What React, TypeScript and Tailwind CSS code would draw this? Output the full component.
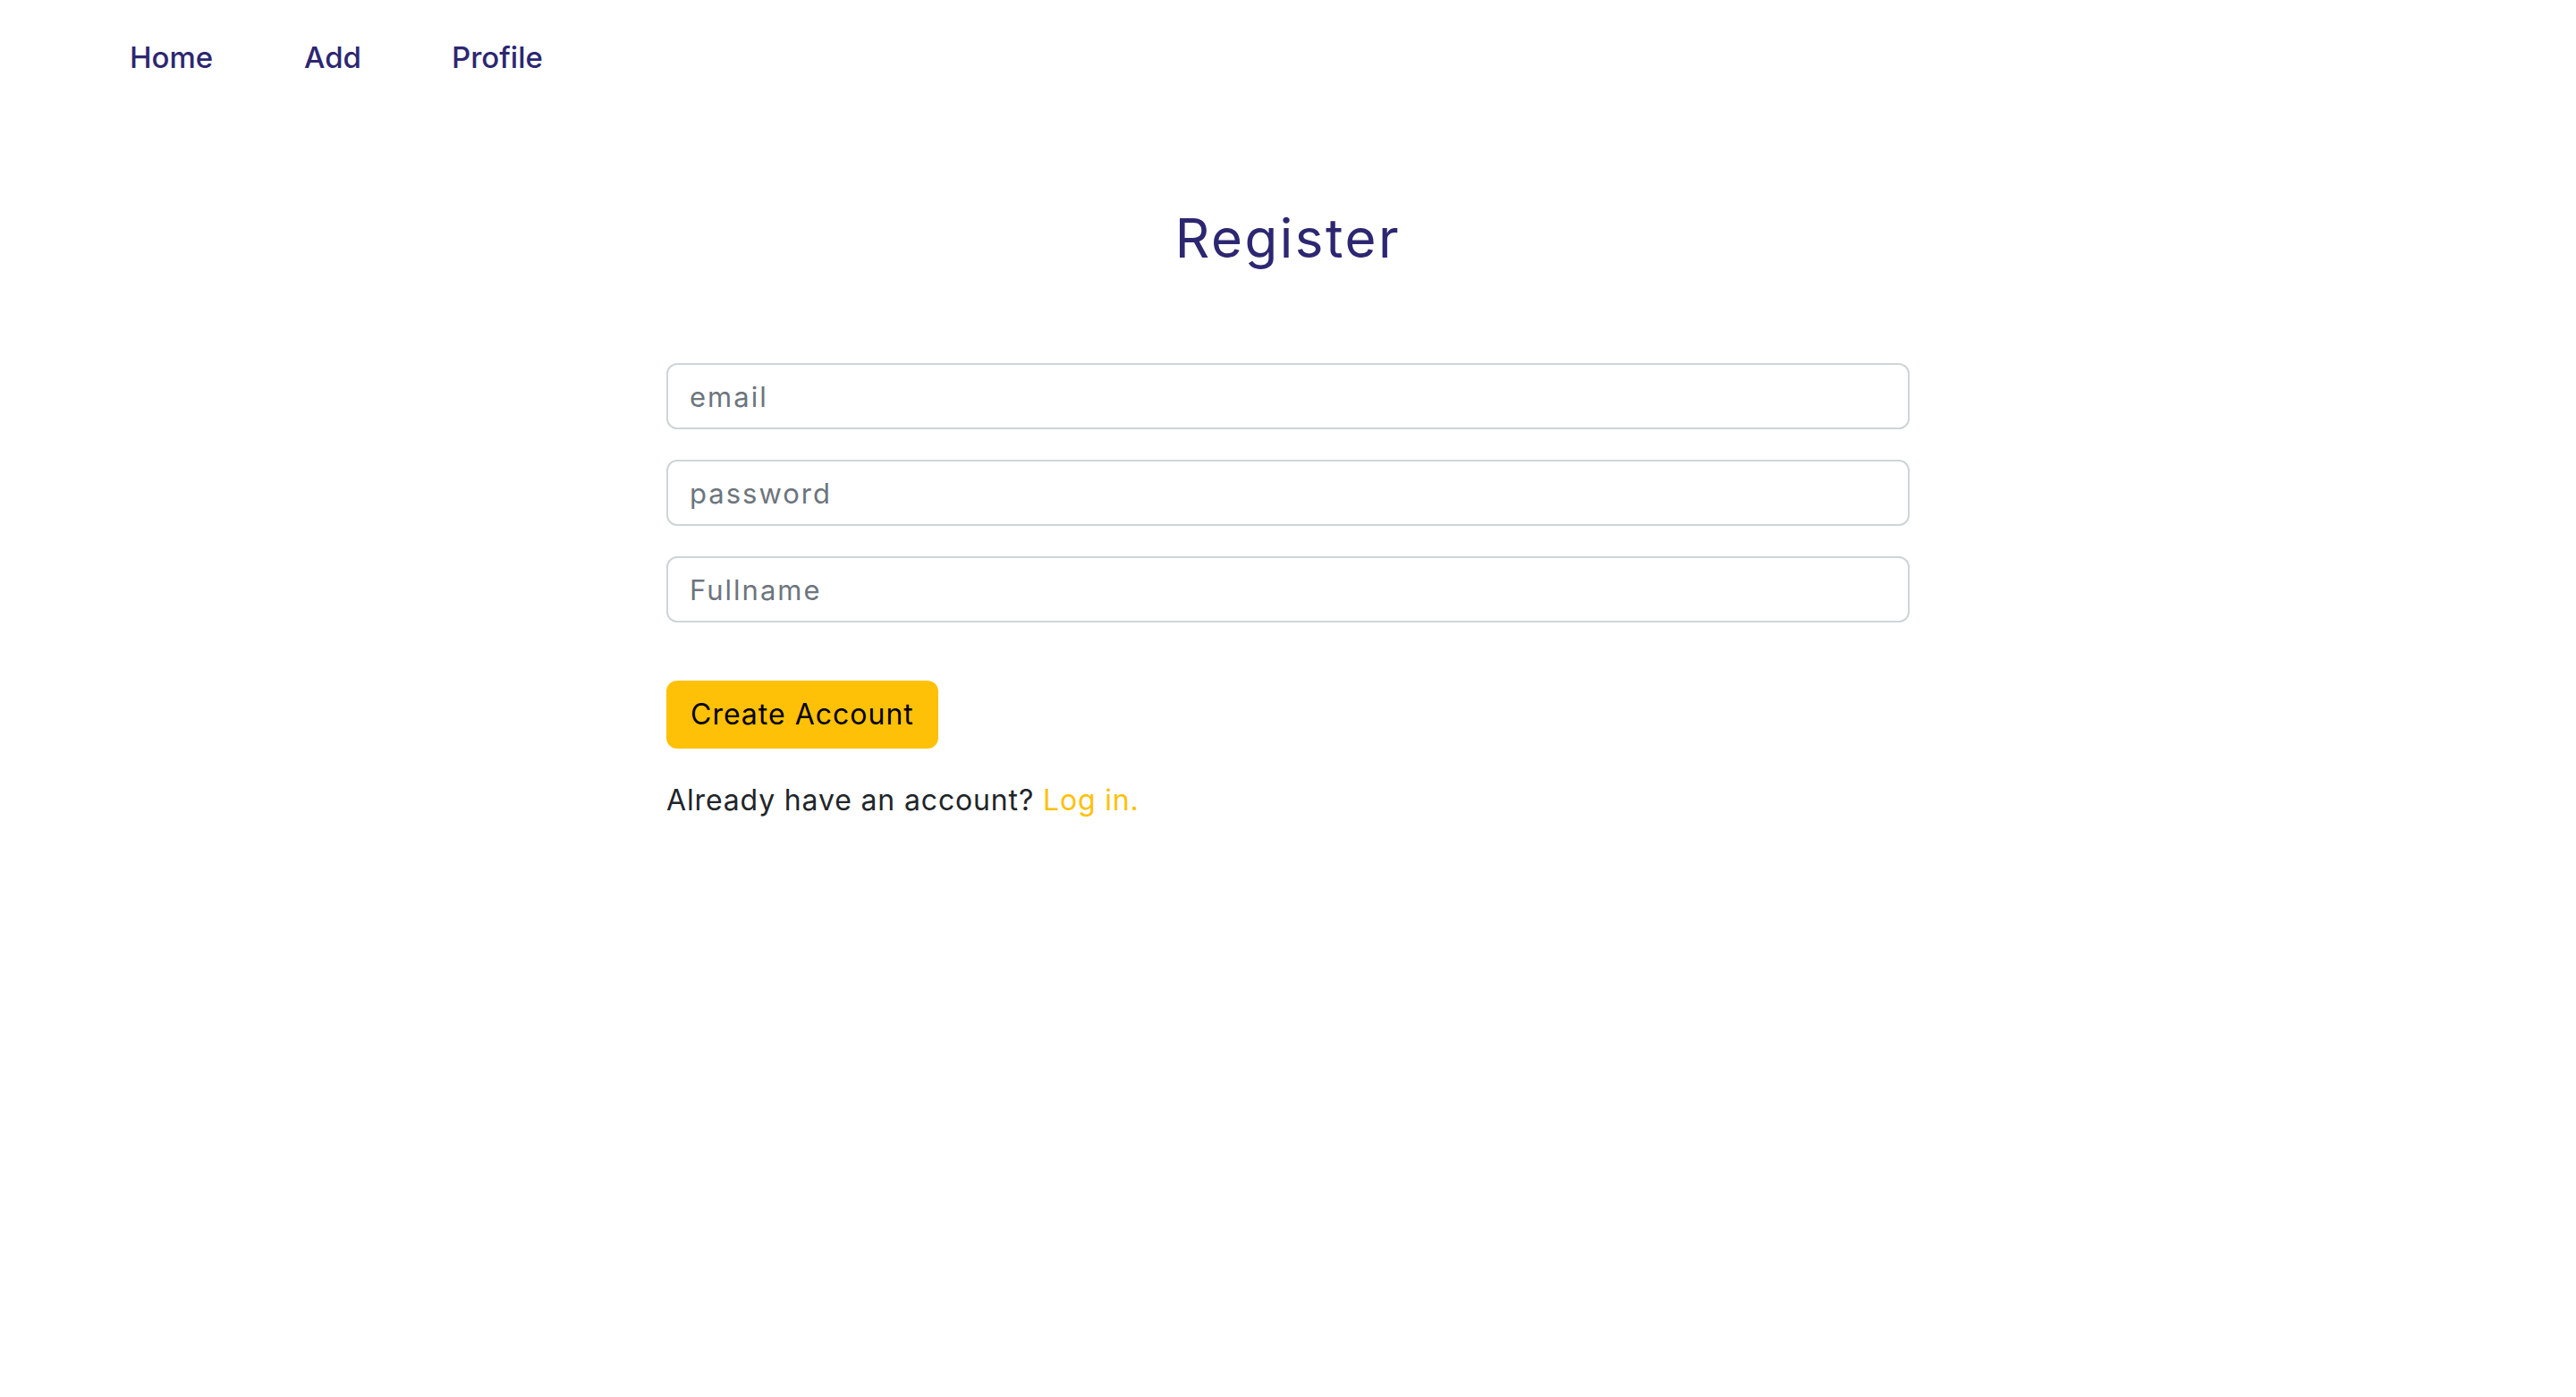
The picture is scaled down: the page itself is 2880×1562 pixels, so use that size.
import React from "react";

export default function App() {
  const font = { fontFamily: "Inter, 'Open Sans', sans-serif" };
  const inputCls =
    "h-[74px] w-full rounded-[12px] border-2 border-[#ced4da] px-[24px] text-[31px] tracking-[2px] text-[#212529] placeholder:text-[#6c757d] outline-none";
  return (
    <div className="min-h-[1562px] w-full bg-white text-[#212529]" style={font}>
      <nav className="flex items-center pl-[145px] pt-[37px] text-[33px] leading-[54px] font-medium text-[#2d2771]">
        <a className="w-[195px]">Home</a>
        <a className="w-[165px]">Add</a>
        <a>Profile</a>
      </nav>
      <h1 className="mt-[137px] text-center text-[60px] leading-[77px] tracking-[2.5px] font-normal text-[#2d2771]">
        Register
      </h1>
      <form className="mx-auto mt-[101px] flex w-[1390px] flex-col">
        <input placeholder="email" className={inputCls} />
        <input placeholder="password" className={"mt-[34px] " + inputCls} />
        <input placeholder="Fullname" className={"mt-[34px] " + inputCls} />
        <div className="mt-[65px]">
          <button
            type="button"
            className="h-[76px] rounded-[12px] bg-[#ffc107] px-[27px] text-[32px] tracking-[1px] text-black"
          >
            Create Account
          </button>
        </div>
        <p className="mt-[34px] text-[32px] leading-[48px] tracking-[0.85px] text-[#212529]">
          Already have an account? <a className="text-[#ffc107]">Log in.</a>
        </p>
      </form>
    </div>
  );
}
